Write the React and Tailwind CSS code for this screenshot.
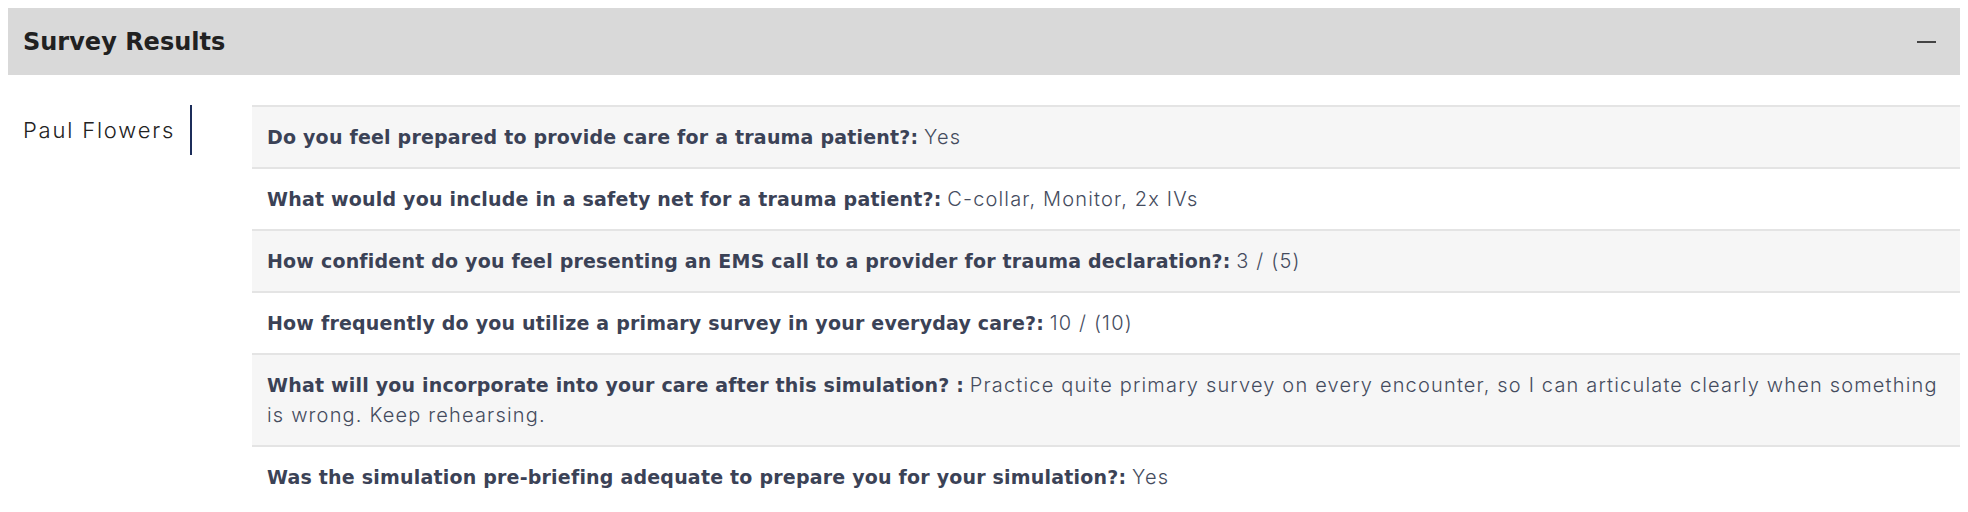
import React from "react";

const rows = [
  { q: "Do you feel prepared to provide care for a trauma patient?:", a: "Yes" },
  { q: "What would you include in a safety net for a trauma patient?:", a: "C-collar, Monitor, 2x IVs" },
  { q: "How confident do you feel presenting an EMS call to a provider for trauma declaration?:", a: "3 / (5)" },
  { q: "How frequently do you utilize a primary survey in your everyday care?:", a: "10 / (10)" },
  {
    q: "What will you incorporate into your care after this simulation? :",
    a: "Practice quite primary survey on every encounter, so I can articulate clearly when something is wrong. Keep rehearsing.",
  },
  { q: "Was the simulation pre-briefing adequate to prepare you for your simulation?:", a: "Yes" },
];

export default function App() {
  return (
    <div className="p-2 bg-white font-['Inter',sans-serif]">
      <div className="h-[67px] bg-[#d9d9d9] flex items-center justify-between pl-[15px] pr-6">
        <h2 className="font-['DejaVu_Sans',sans-serif] text-[24px] font-bold text-[#212121]">Survey Results</h2>
        <span className="block w-[19px] h-[2px] bg-[#444]" />
      </div>
      <div className="flex mt-[30px]">
        <div className="w-[244px] shrink-0 pl-[15px]">
          <div className="inline-flex items-center h-[50px] pr-[15px] border-r-2 border-[#1c2d5a] text-[22px] font-light tracking-[1.8px] text-[#222]">
            Paul Flowers
          </div>
        </div>
        <div className="flex-1 border-t-2 border-[#e4e4e4]">
          {rows.map((r, i) => (
            <div
              key={i}
              className={`px-[15px] py-[15px] text-[20px] leading-[30px] text-[#3b4256] ${i < rows.length - 1 ? "border-b-2 border-[#e4e4e4]" : ""} ${i % 2 === 0 ? "bg-[#f6f6f6]" : "bg-white"}`}
            >
              <span className="font-['DejaVu_Sans',sans-serif] text-[19px] leading-[30px] font-bold tracking-[0.2px]">{r.q}</span>{" "}
              <span className="font-light tracking-[1.17px] text-[#454c5e]">{r.a}</span>
            </div>
          ))}
        </div>
      </div>
    </div>
  );
}
